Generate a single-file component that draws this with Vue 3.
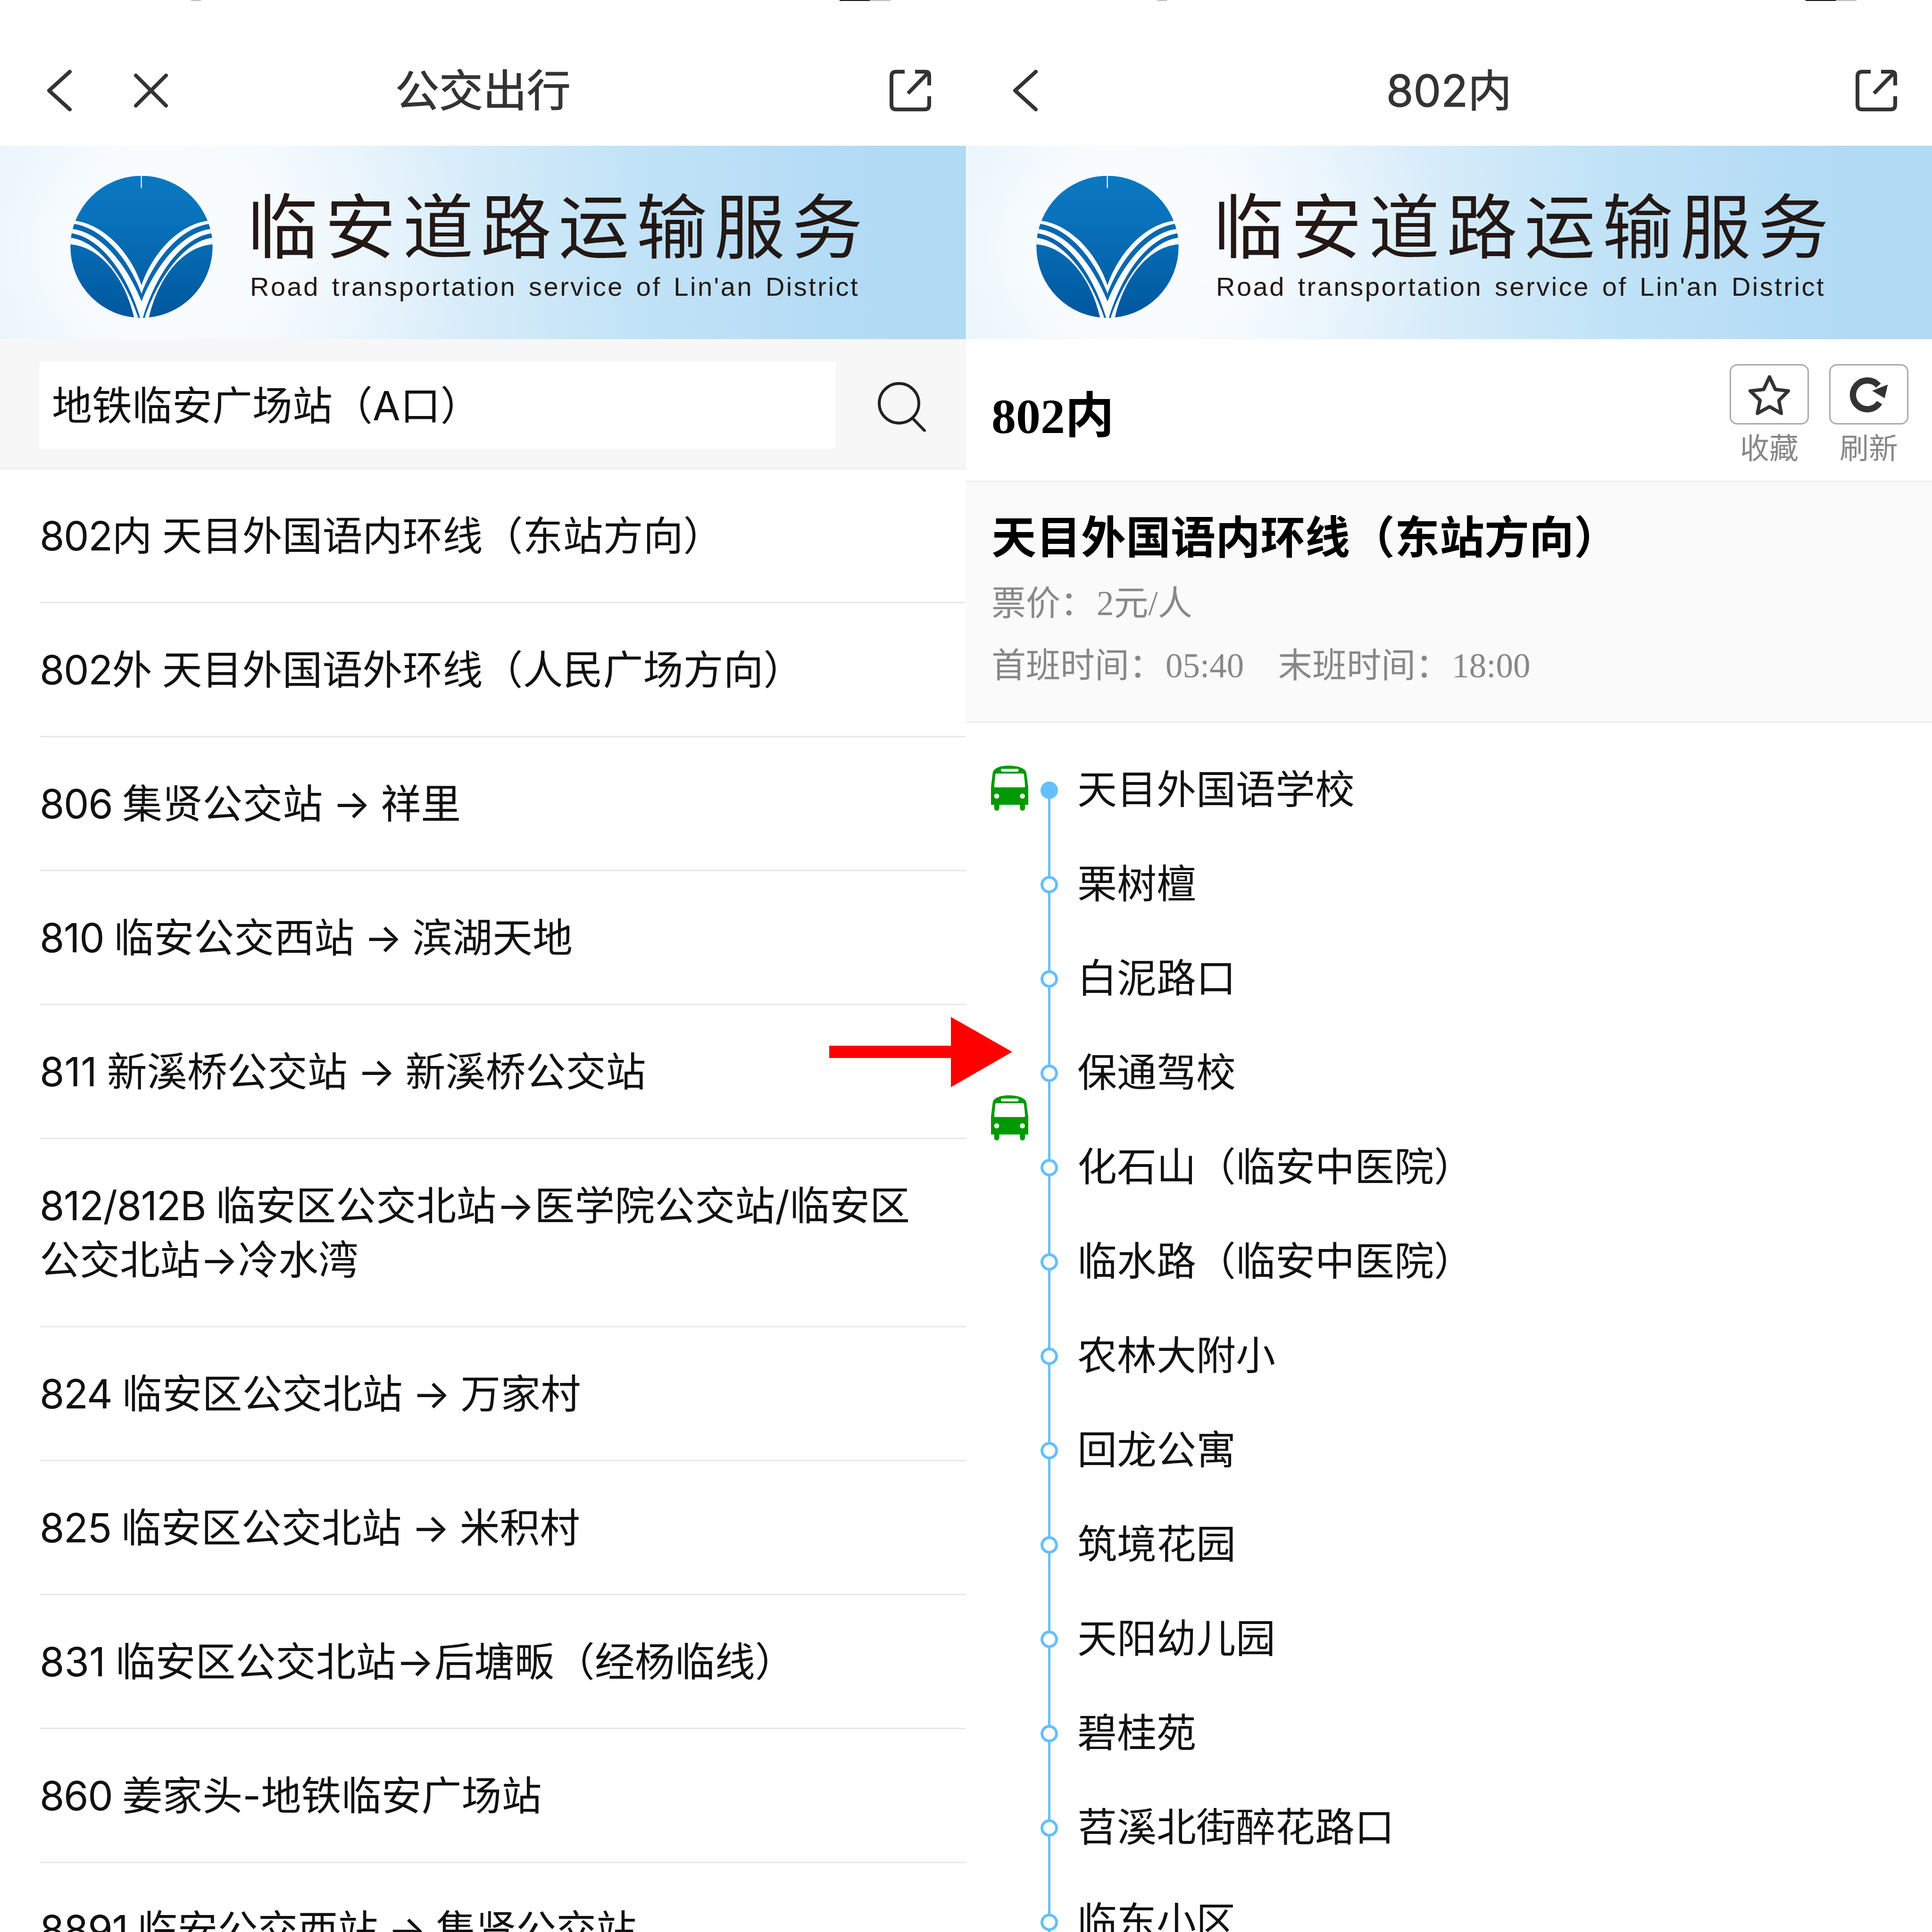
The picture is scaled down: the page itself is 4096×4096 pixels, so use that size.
<script setup>
const routes = [
  [{ code: '802', tight: true, text: '内 天目外国语内环线（东站方向）' }],
  [{ code: '802', tight: true, text: '外 天目外国语外环线（人民广场方向）' }],
  [{ code: '806', tight: true, text: ' 集贤公交站 → 祥里' }],
  [{ code: '810', tight: true, text: ' 临安公交西站 → 滨湖天地' }],
  [{ code: '811', text: ' 新溪桥公交站 → 新溪桥公交站' }],
  [{ code: '812/812B', tight: true, text: ' 临安区公交北站→医学院公交站/临安区' }, { code: '', text: '公交北站→冷水湾' }],
  [{ code: '824', tight: true, text: ' 临安区公交北站 → 万家村' }],
  [{ code: '825', tight: true, text: ' 临安区公交北站 → 米积村' }],
  [{ code: '831', text: ' 临安区公交北站→后塘畈（经杨临线）' }],
  [{ code: '860', tight: true, text: ' 姜家头-地铁临安广场站' }],
  [{ code: '8891', tight: true, text: ' 临安公交西站 → 集贤公交站' }]
]
const stops = [
  { name: '天目外国语学校', first: true, bus: 'bus-at' },
  { name: '栗树檀' },
  { name: '白泥路口' },
  { name: '保通驾校', bus: 'bus-after' },
  { name: '化石山（临安中医院）' },
  { name: '临水路（临安中医院）' },
  { name: '农林大附小' },
  { name: '回龙公寓' },
  { name: '筑境花园' },
  { name: '天阳幼儿园' },
  { name: '碧桂苑' },
  { name: '苕溪北街醉花路口' },
  { name: '临东小区' }
]
const busPath = 'M265 190C210 190 170 205 163 235L152 325V438H172V455Q172 475 188 475Q205 475 205 455V438H335V455Q335 475 351 475Q368 475 368 455V438H388V325L376 235C370 205 320 190 265 190ZM224 210H318Q327 210 327 219Q327 228 318 228H224Q215 228 215 219Q215 210 224 210ZM185 240H355Q360 240 361 248L368 320Q368 327 360 327H180Q172 327 172 320L179 248Q180 240 185 240ZM188 367A16 16 0 1 1 188 399A16 16 0 1 1 188 367ZM351 367A16 16 0 1 1 351 399A16 16 0 1 1 351 367Z'
</script>

<template>
  <div class="page">
    <section class="panel">
      <div class="status"><i class="s-a"></i><i class="s-b"></i><i class="s-c"></i></div>
      <header class="nav">
        <div class="nav-left">
          <svg class="ic-back" viewBox="0 0 54 88"><polyline points="50,4 6,44 50,84" /></svg>
          <svg class="ic-close" viewBox="0 0 72 72"><path d="M4 4L68 68M68 4L4 68" /></svg>
        </div>
        <div class="nav-title">公交出行</div>
        <div class="nav-right">
          <svg class="ic-share" viewBox="0 0 88 88"><path d="M32 4H14Q4 4 4 14V74Q4 84 14 84H74Q84 84 84 74V56M54 4H76Q84 4 84 12V33M39 50L80 8" /></svg>
        </div>
      </header>
      <div class="banner">
        <svg class="logo" viewBox="148 128 904 904">
          <defs>
            <linearGradient id="lg1" x1="0" y1="0" x2="0" y2="1">
              <stop offset="0" stop-color="#0a78c0" />
              <stop offset="0.3" stop-color="#0872bb" />
              <stop offset="1" stop-color="#00579e" />
            </linearGradient>
            <clipPath id="lc1"><circle cx="600" cy="578" r="451" /></clipPath>
          </defs>
          <circle cx="600" cy="578" r="451" fill="url(#lg1)" />
          <g clip-path="url(#lc1)">
            <path fill="#fafdff" d="M100 405L180 412C380 440 540 640 600 822C660 640 820 440 1020 412L1100 405V562H1052C870 575 710 760 648 1024V1060H552V1024C490 760 330 575 148 562H100Z" />
            <path fill="#0768b0" d="M170 432C360 460 520 660 600 875C680 660 840 460 1030 432L1037 465C850 490 690 700 600 925C510 700 350 490 163 465Z" />
            <path fill="#0664ac" d="M155 492C340 520 505 740 592 1030H580C490 760 320 540 150 520Z" />
            <path fill="#0664ac" d="M1045 492C860 520 695 740 608 1030H620C710 760 880 540 1050 520Z" />
          </g>
          <rect x="595" y="128" width="8" height="77" fill="#cfe6f5" />
        </svg>
        <div class="brand">
          <div class="brand-cn">临安道路运输服务</div>
          <div class="brand-en">Road transportation service of Lin'an District</div>
        </div>
      </div>
      <div class="search">
        <div class="search-input">地铁临安广场站（A口）</div>
        <svg class="ic-search" viewBox="0 0 102 105"><circle cx="45" cy="45" r="42" /><path d="M74 77L100 104" /></svg>
      </div>
      <ul class="routes">
        <li v-for="r in routes" :key="r[0].code + r[0].text" class="route">
          <span v-for="l in r" :key="l.text" class="route-line"><span :class="{ tight: l.tight }">{{ l.code }}</span><span class="route-text">{{ l.text }}</span></span>
        </li>
      </ul>
    </section>

    <section class="panel">
      <div class="status"><i class="s-a"></i><i class="s-b"></i><i class="s-c"></i></div>
      <header class="nav">
        <div class="nav-left">
          <svg class="ic-back" viewBox="0 0 54 88"><polyline points="50,4 6,44 50,84" /></svg>
        </div>
        <div class="nav-title">802内</div>
        <div class="nav-right">
          <svg class="ic-share" viewBox="0 0 88 88"><path d="M32 4H14Q4 4 4 14V74Q4 84 14 84H74Q84 84 84 74V56M54 4H76Q84 4 84 12V33M39 50L80 8" /></svg>
        </div>
      </header>
      <div class="banner banner-right">
        <svg class="logo" viewBox="148 128 904 904">
          <defs>
            <linearGradient id="lg2" x1="0" y1="0" x2="0" y2="1">
              <stop offset="0" stop-color="#0a78c0" />
              <stop offset="0.3" stop-color="#0872bb" />
              <stop offset="1" stop-color="#00579e" />
            </linearGradient>
            <clipPath id="lc2"><circle cx="600" cy="578" r="451" /></clipPath>
          </defs>
          <circle cx="600" cy="578" r="451" fill="url(#lg2)" />
          <g clip-path="url(#lc2)">
            <path fill="#fafdff" d="M100 405L180 412C380 440 540 640 600 822C660 640 820 440 1020 412L1100 405V562H1052C870 575 710 760 648 1024V1060H552V1024C490 760 330 575 148 562H100Z" />
            <path fill="#0768b0" d="M170 432C360 460 520 660 600 875C680 660 840 460 1030 432L1037 465C850 490 690 700 600 925C510 700 350 490 163 465Z" />
            <path fill="#0664ac" d="M155 492C340 520 505 740 592 1030H580C490 760 320 540 150 520Z" />
            <path fill="#0664ac" d="M1045 492C860 520 695 740 608 1030H620C710 760 880 540 1050 520Z" />
          </g>
          <rect x="595" y="128" width="8" height="77" fill="#cfe6f5" />
        </svg>
        <div class="brand">
          <div class="brand-cn">临安道路运输服务</div>
          <div class="brand-en">Road transportation service of Lin'an District</div>
        </div>
      </div>
      <div class="line-head">
        <h1 class="line-no">802内</h1>
        <div class="actions">
          <div class="action">
            <div class="action-box">
              <svg class="ic-star" viewBox="300 140 310 290"><polygon points="455,172 492,252 575,262 515,322 530,405 455,362 378,405 395,322 332,262 418,252" /></svg>
            </div>
            <span>收藏</span>
          </div>
          <div class="action">
            <div class="action-box">
              <svg class="ic-refresh" viewBox="960 170 250 235"><path class="arc" d="M1152 340A92 92 0 1 1 1145 232" /><polygon points="1205,225 1185,312 1105,265" /></svg>
            </div>
            <span>刷新</span>
          </div>
        </div>
      </div>
      <div class="line-info">
        <h2 class="line-name">天目外国语内环线（东站方向）</h2>
        <p class="meta">票价：<span class="val">2元/人</span></p>
        <p class="meta"><span class="meta-first">首班时间：<span class="val">05:40</span></span><span>末班时间：<span class="val">18:00</span></span></p>
      </div>
      <ol class="stops">
        <li v-for="s in stops" :key="s.name" class="stop">
          <span class="node" :class="{ 'node-first': s.first }"></span>
          <svg v-if="s.bus" class="bus" :class="s.bus" viewBox="152 190 236 285"><path fill-rule="evenodd" :d="busPath" /></svg>
          {{ s.name }}
        </li>
      </ol>
    </section>

    <svg class="red-arrow" viewBox="0 0 388 149"><path d="M0 61H258V0L388 74L258 149V87H0Z" /></svg>
  </div>
</template>

<style>
html, body { margin: 0; background: #fff; }
</style>

<style scoped>
.page {
  position: relative;
  display: flex;
  width: 4096px;
  height: 4096px;
  overflow: hidden;
  background: #fff;
  font-family: Inter, "Noto Sans CJK SC", sans-serif;
  color: #111;
}
.panel { width: 2048px; flex: none; }
.status { height: 75px; display: flex; align-items: flex-start; padding-left: 405px; }
.status i { display: block; height: 2px; }
.s-a { width: 21px; background: #bbb; margin-right: 1354px; }
.s-b { width: 64px; background: #111; }
.s-c { width: 44px; background: #bbb; }
.nav {
  height: 234px;
  display: grid;
  grid-template-columns: 1fr auto 1fr;
  align-items: center;
  padding: 0 74px;
  color: #333;
}
.nav-left { display: flex; align-items: center; gap: 132px; padding-left: 28px; }
.nav-right { display: flex; justify-content: flex-end; }
.nav-title { font-size: 93px; line-height: 120px; -webkit-text-stroke: 1.2px #333; }
.nav svg { display: block; fill: none; stroke: #333; }
.ic-back { width: 54px; height: 88px; margin-left: -4px; stroke-width: 8; stroke-linecap: round; stroke-linejoin: round; }
.ic-close { width: 72px; height: 72px; stroke-width: 8; stroke-linecap: round; }
.ic-share { width: 88px; height: 88px; stroke-width: 8; }
.banner {
  height: 410px;
  box-sizing: border-box;
  padding: 64px 0 0 149px;
  display: flex;
  align-items: flex-start;
  background:
    radial-gradient(ellipse 700px 420px at 320px 215px, rgba(255,255,255,.8), rgba(255,255,255,0)),
    linear-gradient(90deg, #e2f1fb 0, #f3f9fe 14%, #eff7fd 28%, #dbeefa 45%, #c2e3f7 65%, #b1daf5 92%, #b1daf5 100%);
}
.banner-right { border-left: 2px solid #fff; padding-left: 147px; }
.logo { width: 302px; height: 302px; flex: none; display: block; }
.brand { margin-left: 79px; width: 1292px; color: #231815; }
.brand-cn {
  margin-top: 23px;
  font-family: "Noto Sans CJK SC", sans-serif;
  font-size: 150px;
  line-height: 150px;
  letter-spacing: 15px;
  white-space: nowrap;
  margin-left: -6px;
}
.brand-en {
  margin-top: 30px;
  font-family: "Liberation Sans", sans-serif;
  font-size: 56px;
  line-height: 64px;
  letter-spacing: 3.5px;
  text-align: justify;
  text-align-last: justify;
  white-space: normal;
}
.search {
  height: 276px;
  box-sizing: border-box;
  background: #f7f7f7;
  border-bottom: 3px solid #eee;
  display: flex;
  align-items: flex-start;
  padding: 48px 0 0 84px;
}
.search-input {
  width: 1688px;
  height: 184px;
  box-sizing: border-box;
  background: #fff;
  padding-left: 26px;
  font-size: 85px;
  line-height: 188px;
}
.ic-search { width: 102px; height: 105px; margin: 43px 0 0 89px; fill: none; stroke: #222; stroke-width: 6; stroke-linecap: round; }
.routes { margin: 0; padding: 0 0 0 84px; list-style: none; }
.route {
  padding: 84px 0 82px;
  border-bottom: 3px solid #e9e9e9;
  font-size: 85px;
  line-height: 115px;
  white-space: nowrap;
}
.route-line { display: block; }
.tight { letter-spacing: -1.5px; }
.route-text { word-spacing: -3px; }
.line-head {
  height: 303px;
  box-sizing: border-box;
  border-bottom: 3px solid #eee;
  display: flex;
  justify-content: space-between;
  align-items: flex-start;
  padding: 53px 50px 0 54px;
}
.line-no {
  margin: 46px 0 0;
  font-family: "Liberation Serif", "Noto Sans CJK SC", serif;
  font-weight: 700;
  font-size: 104px;
  line-height: 130px;
  color: #000;
}
.actions { display: flex; gap: 43px; }
.action { width: 168px; display: flex; flex-direction: column; align-items: center; font-family: "Noto Sans CJK SC", sans-serif; font-size: 62px; line-height: 80px; color: #888; }
.action span { margin-top: 6px; }
.action-box {
  width: 168px;
  height: 128px;
  box-sizing: border-box;
  border: 3px solid #aaa;
  border-radius: 16px;
  display: flex;
  align-items: center;
  justify-content: center;
  background: #fff;
}
.ic-star { width: 103px; height: 97px; fill: none; stroke: #333; stroke-width: 22; stroke-linejoin: round; }
.ic-refresh { width: 83px; height: 78px; fill: #333; }
.ic-refresh .arc { fill: none; stroke: #333; stroke-width: 40; }
.line-info {
  height: 510px;
  box-sizing: border-box;
  background: #fafafa;
  border-bottom: 3px solid #eee;
  padding: 51px 0 0 54px;
}
.line-name {
  margin: 0 0 21px;
  font-family: "Noto Sans CJK SC", sans-serif;
  font-weight: 700;
  font-size: 95px;
  line-height: 120px;
  color: #000;
}
.meta {
  margin: 0;
  font-family: "Liberation Serif", "Noto Sans CJK SC", serif;
  font-size: 73px;
  line-height: 132px;
  color: #888;
}
.val { margin-left: 4px; }
.meta-first { margin-right: 72px; }
.stops { margin: 0; padding: 43px 0 0; list-style: none; }
.stop {
  position: relative;
  height: 200px;
  padding-left: 236px;
  font-family: "Noto Sans CJK SC", sans-serif;
  font-size: 84px;
  line-height: 186px;
  color: #111;
}
.stop::before {
  content: "";
  position: absolute;
  left: 174px;
  top: 100px;
  width: 5px;
  height: 200px;
  background: #66bfff;
}
.node {
  position: absolute;
  left: 158px;
  top: 82px;
  width: 37px;
  height: 37px;
  box-sizing: border-box;
  border: 6px solid #66bfff;
  border-radius: 50%;
  background: #fff;
  z-index: 1;
}
.node-first { background: #66bfff; }
.bus { position: absolute; left: 53px; width: 79px; height: 96px; fill: #009900; }
.bus-at { top: 48px; }
.bus-after { top: 147px; z-index: 2; }
.red-arrow { position: absolute; left: 1758px; top: 2156px; width: 388px; height: 149px; fill: #ff0000; }
</style>
